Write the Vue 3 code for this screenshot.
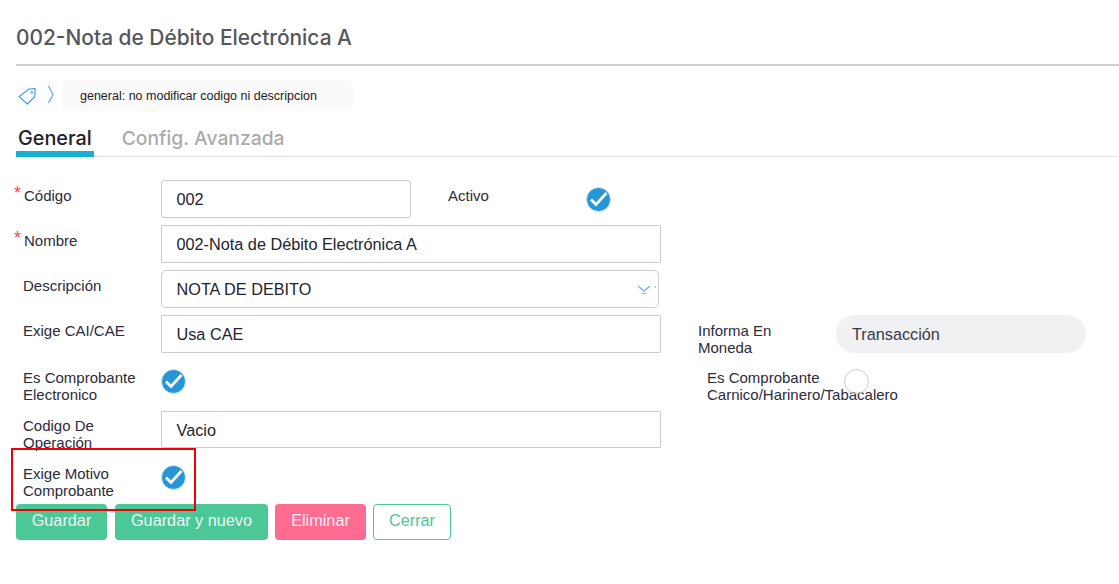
<script setup>
const checkSize = 25
</script>

<template>
  <div class="page">
    <h1 class="title">002-Nota de Débito Electrónica A</h1>
    <div class="crumbs">
      <svg class="tag" width="20" height="20" viewBox="0 0 20 20" fill="none">
        <path d="M1 11.5 11 4 17.3 3.7 16.7 11.7 9.3 19Z" stroke="#4a9ff0" stroke-width="1.2" stroke-linejoin="round" />
        <circle cx="13.7" cy="7.3" r="1" stroke="#4a9ff0" stroke-width="1" />
      </svg>
      <svg class="chev" width="8" height="20" viewBox="0 0 8 20" fill="none">
        <path d="M1.5 1 6 9.5 1.5 18" stroke="#4a9ff0" stroke-width="1.1" />
      </svg>
      <div class="chip">general: no modificar codigo ni descripcion</div>
    </div>
    <div class="tabs">
      <div class="tab active">General</div>
      <div class="tab second">Config. Avanzada</div>
    </div>

    <div class="form">
      <div class="row">
        <label class="lbl req">Código</label>
        <div class="field w250">002</div>
        <label class="lbl side-a">Activo</label>
        <span class="check on shift" :style="{ width: checkSize + 'px', height: checkSize + 'px' }">
          <svg width="25" height="25" viewBox="0 0 25 25" fill="none"><path d="M5 12.5 10 17.5 20.5 6" stroke="#fff" stroke-width="2.8" /></svg>
        </span>
      </div>
      <div class="row">
        <label class="lbl req">Nombre</label>
        <div class="field w500 square">002-Nota de Débito Electrónica A</div>
      </div>
      <div class="row">
        <label class="lbl">Descripción</label>
        <div class="field w498 select">
          NOTA DE DEBITO
          <svg class="arrow" width="20" height="12" viewBox="0 0 20 12" fill="none">
            <path d="M1 2 7 7 13 2" stroke="#7fb2f5" stroke-width="1.6" />
            <path d="M5 9.5h4" stroke="#7fb2f5" stroke-width="1.2" />
            <path d="M18.5 2v2" stroke="#a9b8cc" stroke-width="1" />
          </svg>
        </div>
      </div>
      <div class="row">
        <label class="lbl">Exige CAI/CAE</label>
        <div class="field w500 square">Usa CAE</div>
        <label class="lbl side-b">Informa En<br />Moneda</label>
        <div class="pill">Transacción</div>
      </div>
      <div class="row row-check">
        <label class="lbl">Es Comprobante<br />Electronico</label>
        <span class="check on first" :style="{ width: checkSize + 'px', height: checkSize + 'px' }">
          <svg width="25" height="25" viewBox="0 0 25 25" fill="none"><path d="M5 12.5 10 17.5 20.5 6" stroke="#fff" stroke-width="2.8" /></svg>
        </span>
        <label class="lbl side-c">Es Comprobante<br />Carnico/Harinero/Tabacalero</label>
        <span class="check off" :style="{ width: checkSize + 'px', height: checkSize + 'px' }"></span>
      </div>
      <div class="row row-code">
        <label class="lbl">Codigo De<br />Operación</label>
        <div class="field w500 square short">Vacio</div>
      </div>
      <div class="row row-motivo">
        <label class="lbl">Exige Motivo<br />Comprobante</label>
        <span class="check on first" :style="{ width: checkSize + 'px', height: checkSize + 'px' }">
          <svg width="25" height="25" viewBox="0 0 25 25" fill="none"><path d="M5 12.5 10 17.5 20.5 6" stroke="#fff" stroke-width="2.8" /></svg>
        </span>
        <div class="highlight"></div>
      </div>
    </div>

    <div class="actions">
      <button class="btn green w91">Guardar</button>
      <button class="btn green w153">Guardar y nuevo</button>
      <button class="btn pink w91">Eliminar</button>
      <button class="btn outline">Cerrar</button>
    </div>
  </div>
</template>

<style>
html, body { margin: 0; background: #fff; }
</style>

<style scoped>
.page {
  width: 1119px;
  height: 584px;
  overflow: hidden;
  box-sizing: border-box;
  padding: 24px 0 0 16px;
  font-family: "Liberation Sans", Arial, sans-serif;
  color: #2b2b3b;
}
.title {
  margin: 0;
  height: 40px;
  border-bottom: 2px solid #cdcdd2;
  font: 500 20.9px/27px Inter, sans-serif;
  color: #54565e;
}
.crumbs {
  display: flex;
  align-items: center;
  height: 30px;
  margin-top: 14px;
}
.tag { margin-left: 2px; }
.chev { margin-left: 9px; }
.chip {
  margin-left: 7px;
  width: 273px;
  height: 30px;
  padding-left: 18px;
  background: #fafafa;
  border-radius: 6px;
  font-size: 12.5px;
  line-height: 32px;
  color: #1c1c24;
}
.tabs {
  display: flex;
  height: 47px;
  box-sizing: border-box;
  border-bottom: 1px solid #dfdfe2;
}
.tab {
  height: 47px;
  box-sizing: border-box;
  padding: 16px 2px 0;
  font: 500 19.8px/24px Inter, sans-serif;
  color: #aaaaaa;
  margin-right: 26px;
}
.tab.second { font-size: 19.3px; }
.tab.active {
  color: #20202c;
  border-bottom: 6px solid #17b0d0;
}
.form {
  display: flex;
  flex-direction: column;
  margin-top: 23px;
}
.row {
  display: flex;
  height: 38px;
  margin-bottom: 7px;
  position: relative;
}
.lbl {
  flex: none;
  padding-top: 7px;
  font-size: 15px;
  line-height: 17px;
  white-space: nowrap;
}
.row > .lbl:first-child {
  width: 138px;
  box-sizing: border-box;
  margin-right: 7px;
  padding-left: 7px;
}
.row > .req:first-child { padding-left: 8px; }
.req { position: relative; }
.req::before {
  content: "*";
  position: absolute;
  left: -2px;
  top: 5px;
  color: #f5455c;
  font-size: 18px;
}
.field {
  box-sizing: border-box;
  height: 38px;
  border: 1px solid #cccccc;
  border-radius: 3px;
  padding-left: 14.5px;
  font-size: 16.25px;
  line-height: 37px;
  background: #fff;
  color: #23232f;
  position: relative;
}
.square { border-radius: 1px; }
.short { height: 37px; }
.w250 { width: 250px; }
.w500 { width: 500px; }
.w498 { width: 498px; border-radius: 5px; }
.arrow { position: absolute; right: 1px; top: 13px; }
.side-a { width: 139px; margin-left: 37px; }
.side-b { width: 138px; margin-left: 37px; }
.pill {
  width: 250px;
  height: 38px;
  box-sizing: border-box;
  padding-left: 16px;
  border-radius: 19px;
  background: #f0f1f3;
  font-size: 16.25px;
  line-height: 39px;
  color: #3a3a46;
}
.check {
  flex: none;
  display: block;
  box-sizing: border-box;
  border-radius: 50%;
  margin-top: 7px;
  overflow: hidden;
}
.shift { margin-left: -1px; }
.check svg { display: block; margin: -1px; }
.on { background: #2596d8; border: 1px solid #d6e6f2; }
.off { background: transparent; border: 1px solid #cccccc; }
.row-check { height: 44px; margin-bottom: 7px; }
.row-check .lbl { padding-top: 9px; }
.row-check .first { margin-top: 9px; }
.row-check .off { margin-top: 9px; }
.row-check .side-c { width: 137px; margin-left: 521px; }
.row-code { height: 37px; margin-bottom: 8px; }
.row-code .lbl { padding-top: 6px; }
.row-motivo { height: 48px; margin-bottom: 0; }
.row-motivo .lbl { padding-top: 9px; }
.row-motivo .first { margin-top: 9px; }
.highlight {
  position: absolute;
  left: -5px;
  top: -8px;
  width: 181px;
  height: 59px;
  border: 2px solid #f00000;
  pointer-events: none;
}
.actions {
  display: flex;
  gap: 8px;
}
.btn {
  height: 36px;
  border: 0;
  border-radius: 4px;
  padding: 0 0 4px;
  font: 16.25px "Liberation Sans", Arial, sans-serif;
  color: #eef9f4;
}
.w91 { width: 91px; }
.w153 { width: 153px; }
.green { background: #4cc797; }
.pink { background: #ff6b91; color: #ffeef2; margin-left: -1px; }
.outline {
  width: 78px;
  background: #fff;
  border: 1px solid #4cc797;
  color: #4cc797;
  margin-left: -1px;
}
</style>
